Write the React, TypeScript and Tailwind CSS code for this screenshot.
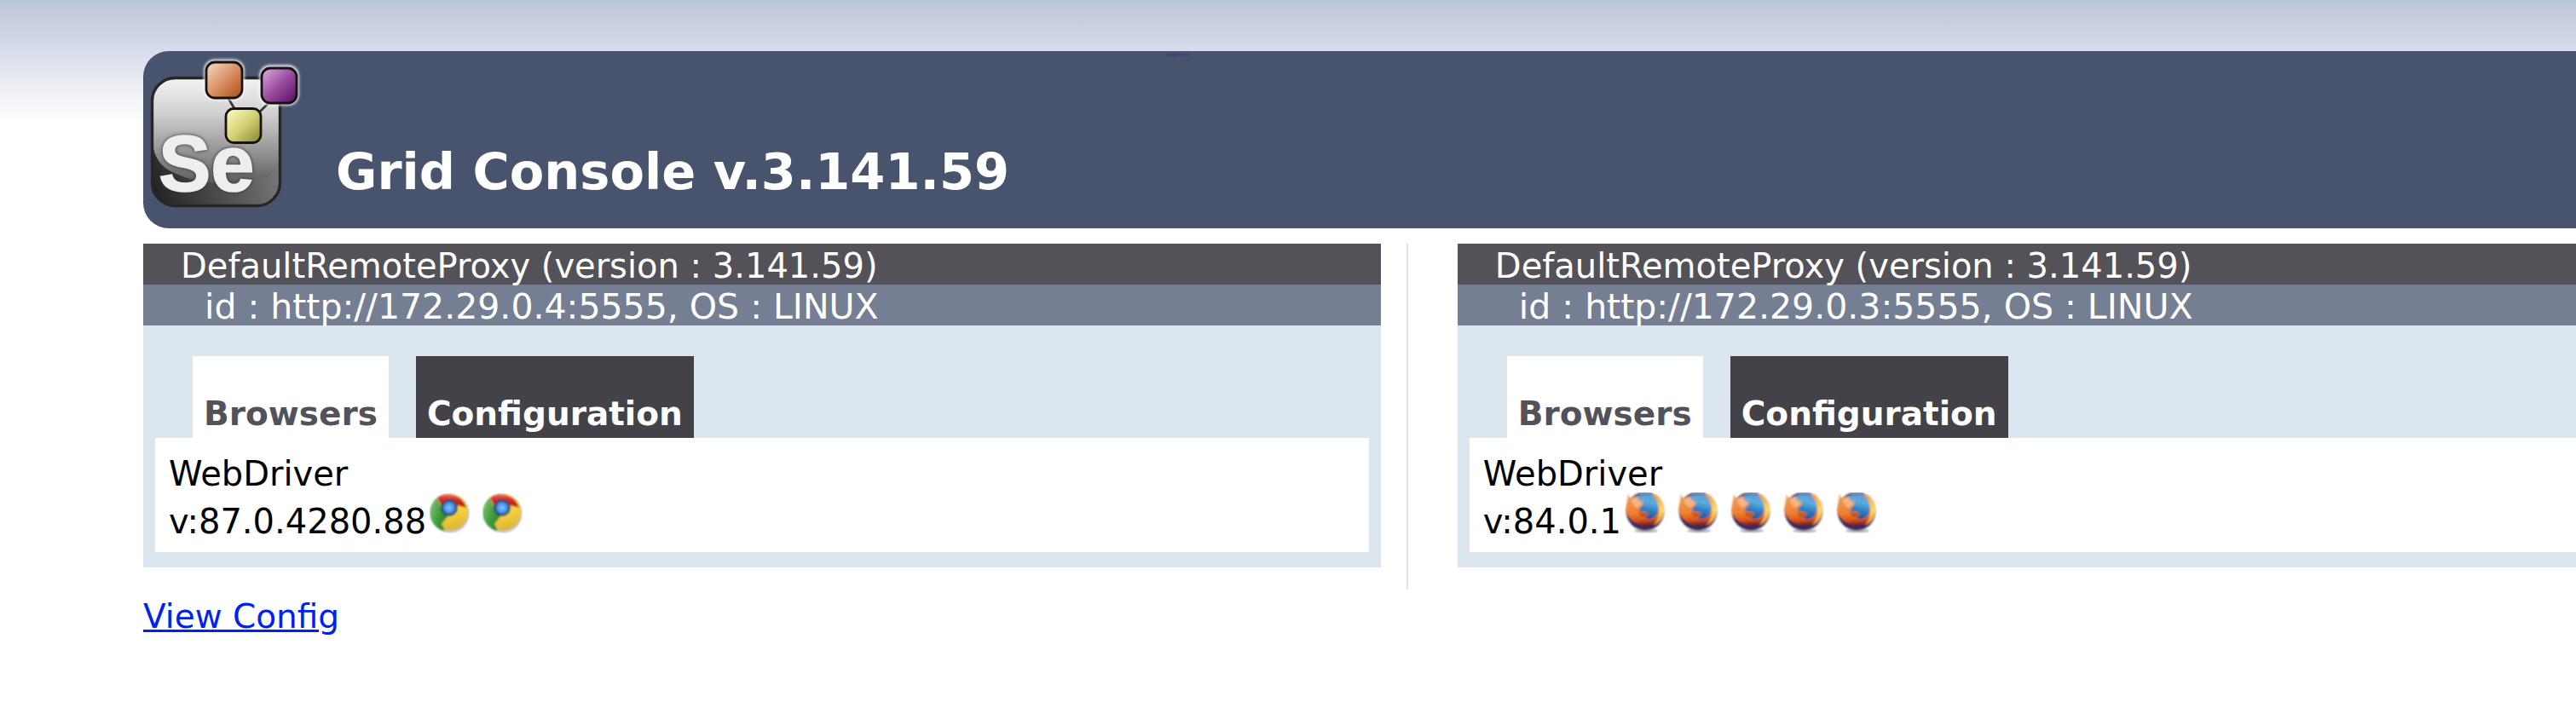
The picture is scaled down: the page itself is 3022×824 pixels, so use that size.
import React from "react";

function Logo() {
  return (
    <svg viewBox="8 10 192 208" className="h-52 w-48 shrink-0" role="img" aria-label="Selenium Grid">
      <defs>
        <linearGradient id="base" x1="0" y1="1" x2="1" y2="0.6">
          <stop offset="0" stopColor="#1f1f1f" />
          <stop offset="1" stopColor="#7d7d7d" />
        </linearGradient>
        <linearGradient id="gloss" x1="0" y1="0" x2="0" y2="1">
          <stop offset="0" stopColor="#f4f4f4" />
          <stop offset="0.35" stopColor="#cfcfcf" />
          <stop offset="0.75" stopColor="#8c8c8c" />
          <stop offset="1" stopColor="#5c5c5c" />
        </linearGradient>
        <linearGradient id="orange" x1="0" y1="0" x2="1" y2="1">
          <stop offset="0" stopColor="#f8dcc8" />
          <stop offset="0.5" stopColor="#d99267" />
          <stop offset="1" stopColor="#a94c14" />
        </linearGradient>
        <linearGradient id="purple" x1="0" y1="0" x2="1" y2="1">
          <stop offset="0" stopColor="#dcb0e0" />
          <stop offset="0.5" stopColor="#9a4ca0" />
          <stop offset="1" stopColor="#560a5c" />
        </linearGradient>
        <linearGradient id="yellow" x1="0" y1="0" x2="1" y2="1">
          <stop offset="0" stopColor="#ffffc4" />
          <stop offset="0.5" stopColor="#d3d277" />
          <stop offset="1" stopColor="#85842a" />
        </linearGradient>
        <clipPath id="tile">
          <rect x="18.5" y="41.5" width="150" height="150" rx="27" />
        </clipPath>
        <filter id="halo" x="-30%" y="-30%" width="160%" height="160%">
          <feGaussianBlur stdDeviation="1.6" />
        </filter>
        <filter id="edge" x="-10%" y="-10%" width="120%" height="120%">
          <feGaussianBlur stdDeviation="0.7" />
        </filter>
      </defs>
      <rect x="18.5" y="41.5" width="150" height="150" rx="27" fill="url(#base)" />
      <path
        d="M18 41H169V130C167 149 160 158 143 161C105 168 72 166 47 154C28 147 21 134 19 118Z"
        fill="url(#gloss)"
        clipPath="url(#tile)"
      />
      <rect
        x="18.5"
        y="41.5"
        width="150"
        height="150"
        rx="27"
        fill="none"
        stroke="#262626"
        strokeWidth="3.4"
        filter="url(#edge)"
      />
      <g fontSize="92" fontWeight="700" fontFamily="'Liberation Sans', Arial, sans-serif">
        <text
          x="26"
          y="174"
          fill="#eeeeee"
          stroke="#eeeeee"
          strokeWidth="1.6"
          style={{ filter: "drop-shadow(0 0 2px #333333)" }}
        >
          Se
        </text>
      </g>
      <path d="M107 64L116 79M155 71L144 82" stroke="#333333" strokeWidth="2.6" fill="none" />
      <g filter="url(#halo)" fill="none" stroke="#ffffff" strokeOpacity="0.8" strokeWidth="6">
        <rect x="82" y="22.5" width="42" height="42" rx="10" />
        <rect x="147" y="29" width="41" height="42" rx="10" />
      </g>
      <g stroke="#171210" strokeWidth="2.8">
        <rect x="82" y="23" width="42" height="42" rx="10" fill="url(#orange)" />
        <rect x="147" y="30" width="41" height="41" rx="10" fill="url(#purple)" />
        <rect x="105" y="77.5" width="41" height="40" rx="9" fill="url(#yellow)" />
      </g>
    </svg>
  );
}

function ChromeIcon() {
  return (
    <svg viewBox="0 0 48 48" className="size-12" role="img" aria-label="chrome">
      <defs>
        <linearGradient id="cr" x1="0" y1="0" x2="0" y2="1">
          <stop offset="0" stopColor="#e8786c" />
          <stop offset="0.4" stopColor="#d3271d" />
          <stop offset="1" stopColor="#b51d15" />
        </linearGradient>
        <linearGradient id="cg" x1="0" y1="0" x2="1" y2="0.6">
          <stop offset="0" stopColor="#8acb7c" />
          <stop offset="0.6" stopColor="#3f9c3c" />
          <stop offset="1" stopColor="#2f8233" />
        </linearGradient>
        <linearGradient id="cy" x1="0.3" y1="0" x2="0.6" y2="1">
          <stop offset="0" stopColor="#fff08a" />
          <stop offset="0.5" stopColor="#f7d53f" />
          <stop offset="1" stopColor="#dbb435" />
        </linearGradient>
        <radialGradient id="cb">
          <stop offset="0" stopColor="#8cc8ff" />
          <stop offset="0.7" stopColor="#4a92e8" />
          <stop offset="1" stopColor="#3572c4" />
        </radialGradient>
        <filter id="cs" x="-10%" y="-10%" width="120%" height="120%">
          <feGaussianBlur stdDeviation="0.8" />
        </filter>
      </defs>
      <circle cx="24" cy="25" r="22.5" fill="#a9a3b4" opacity="0.65" filter="url(#cs)" />
      <g filter="url(#cs)">
        <circle cx="23.5" cy="23" r="21.5" fill="url(#cy)" />
        <path d="M9 6A22 22 0 0 1 43 18L28 14L15 19Z" fill="url(#cr)" />
        <path d="M9 6A22 22 0 0 0 18 45L14 37L22 27L14 19Z" fill="url(#cg)" />
        <circle cx="23" cy="18" r="10" fill="#2c4763" />
        <circle cx="23" cy="18" r="7.6" fill="url(#cb)" />
      </g>
    </svg>
  );
}

function FirefoxIcon() {
  return (
    <svg viewBox="0 0 48 48" className="size-12" role="img" aria-label="firefox">
      <defs>
        <linearGradient id="fo" x1="0.4" y1="0" x2="0.5" y2="1">
          <stop offset="0" stopColor="#eda066" />
          <stop offset="0.6" stopColor="#ee8030" />
          <stop offset="0.84" stopColor="#d9541c" />
          <stop offset="1" stopColor="#7c1a1c" />
        </linearGradient>
        <linearGradient id="fy" x1="0" y1="0" x2="0" y2="1">
          <stop offset="0" stopColor="#f5a93a" />
          <stop offset="0.5" stopColor="#ffd968" />
          <stop offset="1" stopColor="#f0902e" />
        </linearGradient>
        <linearGradient id="fb" x1="0.6" y1="0" x2="0.4" y2="1">
          <stop offset="0" stopColor="#5f95c8" />
          <stop offset="0.3" stopColor="#5cb0e0" />
          <stop offset="0.65" stopColor="#2c7cc2" />
          <stop offset="1" stopColor="#1b4f8e" />
        </linearGradient>
        <filter id="fs" x="-10%" y="-10%" width="120%" height="120%">
          <feGaussianBlur stdDeviation="0.8" />
        </filter>
      </defs>
      <ellipse cx="25" cy="45" rx="14" ry="2" fill="#8d8d9a" opacity="0.7" filter="url(#fs)" />
      <g filter="url(#fs)">
        <circle cx="24" cy="22" r="22.5" fill="#3a2a55" />
        <path
          d="M4 1L3 9L1 20A23 22.5 0 0 0 46 21C46 12 42 6 36 2L26 3L15 4L8 7L5 5Z"
          fill="url(#fo)"
        />
        <path
          d="M15 5C20 1 30 1 35 6C41 12 41 22 37 27C33 32 27 32 24 30C23 28 28 28 28 25C26 22 21 24 17 21C17 17 22 16 22 13C21 10 17 10 15 8Z"
          fill="url(#fb)"
        />
        <path d="M16 0H32L34 4L27 2L17 5Z" fill="#6a7db0" />
        <path d="M34 3C43 6 47 14 46 23C45 31 40 36 33 39C38 34 41 26 40 18C39 11 38 7 34 3Z" fill="url(#fy)" />
        <path d="M8 8L14 5L16 9L21 12C20 15 17 16 15 18C10 16 8 12 8 8Z" fill="#f6bd8c" opacity="0.8" />
        <path d="M17 22C20 25 24 23 28 25C28 28 24 27 22 29C18 29 17 26 17 22Z" fill="#c95517" />
      </g>
    </svg>
  );
}

type Proxy = { id: string; version: string; slots: number; Icon: () => React.JSX.Element };

const proxies: Proxy[] = [
  { id: "http://172.29.0.4:5555", version: "87.0.4280.88", slots: 2, Icon: ChromeIcon },
  { id: "http://172.29.0.3:5555", version: "84.0.1", slots: 5, Icon: FirefoxIcon },
];

function ProxyCard({ id, version, slots, Icon }: Proxy) {
  return (
    <section className="min-w-0 bg-[#dce6ee] pb-[18px] whitespace-nowrap">
      <h2 className="bg-[#525258] pt-1 pl-11 leading-11 text-white">DefaultRemoteProxy (version : 3.141.59)</h2>
      <p className="bg-[#757f94] pt-1 pl-[72px] text-[41px] leading-11 text-white">id : {id}, OS : LINUX</p>
      <div role="tablist" className="flex gap-8 pt-9 pl-[58px] text-[39px] font-bold">
        <button role="tab" aria-selected="true" className="bg-white px-[13px] pt-11 pb-1 leading-12 text-[#525258]">
          Browsers
        </button>
        <button role="tab" aria-selected="false" className="bg-[#424248] px-[13px] pt-11 pb-1 leading-12 text-white">
          Configuration
        </button>
      </div>
      <div role="tabpanel" className="mx-3.5 bg-white px-4 pt-5 pb-[14px] text-black">
        <p className="leading-11">WebDriver</p>
        <div className="flex h-14 gap-1">
          <span className="pt-3 leading-11">v:{version}</span>
          <span className="flex gap-3.5">
            {Array.from({ length: slots }, (_, i) => (
              <Icon key={i} />
            ))}
          </span>
        </div>
      </div>
    </section>
  );
}

export default function App() {
  return (
    <div className="min-h-screen overflow-hidden bg-white bg-[linear-gradient(to_bottom,#bcc7da_0px,#cad0e0_30px,#d5dbe9_56px,#e4e7f0_84px,#f4f5f9_116px,#ffffff_148px)] bg-no-repeat pt-15 pl-42 font-['Verdana','DejaVu_Sans',sans-serif] text-[40px]">
      <header className="relative flex h-52 items-start rounded-l-[30px] bg-[#48536e]">
        <Logo />
        <h1 className="pt-[106px] pl-[34px] text-[59px] leading-[72px] font-bold whitespace-nowrap text-white">
          Grid Console v.3.141.59
        </h1>
        <a href="#selenium" className="absolute top-0 left-[1200px] text-[6px] leading-2 text-[#4b2a80]">
          Selenium
        </a>
      </header>
      <main className="grid w-[105%] grid-cols-[1484fr_1455fr] gap-x-[58px] pt-[18px]">
        <div className="min-w-0 border-r-2 border-[#dce6ee] pr-[30px] pb-[26px]">
          <ProxyCard {...proxies[0]} />
        </div>
        <div className="min-w-0">
          <ProxyCard {...proxies[1]} />
        </div>
      </main>
      <a href="#config" className="mt-2 inline-block text-[39px] leading-12 text-[#0022ee] underline">
        View Config
      </a>
    </div>
  );
}
